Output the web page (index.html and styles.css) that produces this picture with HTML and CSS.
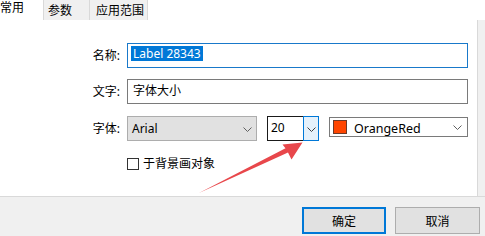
FILE: index.html
```html
<!DOCTYPE html>
<html>
<head>
<meta charset="utf-8">
<link rel="stylesheet" href="styles.css">
</head>
<body>
<div class="dialog">
  <div class="tabs">
    <div class="tab active">常用</div>
    <div class="tab t2">参数</div>
    <div class="tab t3">应用范围</div>
  </div>
  <div class="main">
    <div class="panel">
      <div class="row r1">
        <span class="lbl">名称:</span>
        <div class="input focused"><span class="sel">Label 28343</span></div>
      </div>
      <div class="row r2">
        <span class="lbl">文字:</span>
        <div class="input">字体大小</div>
      </div>
      <div class="row r3">
        <span class="lbl">字体:</span>
        <div class="font-combo">
          <span>Arial</span>
          <svg class="chev" width="9" height="5" viewBox="0 0 9 5"><path d="M0.5 0.5 L4.5 4.5 L8.5 0.5" fill="none" stroke="#606060" stroke-width="1"/></svg>
        </div>
        <div class="size-combo">
          <div class="size-text">20</div>
          <div class="size-btn"><svg width="9" height="5" viewBox="0 0 9 5"><path d="M0.5 0.5 L4.5 4.5 L8.5 0.5" fill="none" stroke="#404040" stroke-width="1"/></svg></div>
        </div>
        <div class="color-combo">
          <span class="swatch"></span>
          <span class="color-name">OrangeRed</span>
          <svg class="chev2" width="9" height="5" viewBox="0 0 9 5"><path d="M0.5 0.5 L4.5 4.5 L8.5 0.5" fill="none" stroke="#606060" stroke-width="1"/></svg>
        </div>
      </div>
      <div class="check-row">
        <span class="checkbox"></span>
        <span>于背景画对象</span>
      </div>
    </div>
    <div class="side"></div>
  </div>
  <div class="footer">
    <button class="btn default">确定</button>
    <button class="btn cancel">取消</button>
  </div>
  <svg class="arrow" width="485" height="236" viewBox="0 0 485 236">
    <polygon points="199,193 285.5,148.3 282.5,144.5 302.5,142.5 291.5,159.5 288,152.5" fill="#e8474b"/>
  </svg>
</div>
</body>
</html>
```

FILE: styles.css
```css
body {
  margin: 0;
  width: 485px;
  height: 236px;
  overflow: hidden;
  background: #fff;
  font-family: "Noto Sans", "Noto Sans CJK SC", sans-serif;
  font-size: 12px;
  color: #000;
}

.dialog {
  position: relative;
  width: 485px;
  height: 236px;
  display: flex;
  flex-direction: column;
}

.tabs {
  display: flex;
  height: 20px;
  flex: none;
}

.tab {
  box-sizing: border-box;
  height: 21px;
  line-height: 16px;
  padding-top: 3px;
  text-align: left;
  background: #f0f0f0;
  border-left: 1px solid #d9d9d9;
  border-bottom: 1px solid #d9d9d9;
}

.tab.active {
  width: 43px;
  background: #fff;
  border: none;
  padding-top: 0;
}

.t2 { width: 46px; padding-left: 4px; }
.t3 { width: 59px; padding-left: 6px; border-right: 1px solid #d9d9d9; }

.main {
  display: flex;
  height: 176px;
  flex: none;
}

.panel {
  box-sizing: border-box;
  width: 478px;
  border-right: 1px solid #d9d9d9;
  background: #fff;
  padding-top: 23px;
}

.side {
  flex: 1;
  background: #f0f0f0;
}

.row {
  display: flex;
  align-items: center;
  height: 25px;
}

.r1 { margin-bottom: 11px; }
.r2 { margin-bottom: 12px; }
.r3 { align-items: flex-start; }

.lbl {
  width: 120px;
  margin-right: 7px;
  text-align: right;
  line-height: 25px;
}

.input {
  box-sizing: border-box;
  width: 341px;
  height: 25px;
  border: 1px solid #7a7a7a;
  padding-left: 5px;
  line-height: 22px;
}

.input.focused {
  border-color: #1979ca;
  padding-left: 3px;
}

.sel {
  display: inline-block;
  background: #0078d7;
  color: #fff;
  line-height: 15px;
  padding: 0 2px;
  vertical-align: 1px;
}

.font-combo {
  box-sizing: border-box;
  width: 130px;
  height: 25px;
  background: #e1e1e1;
  border: 1px solid #adadad;
  display: flex;
  align-items: center;
  justify-content: space-between;
  padding: 0 4px 0 4px;
  margin-right: 10px;
}

.chev { margin-top: 1px; }

.size-combo {
  display: flex;
  width: 52px;
  height: 25px;
  margin-right: 10px;
}

.size-text {
  box-sizing: border-box;
  width: 36px;
  height: 25px;
  border: 1px solid #1a1a1a;
  border-right: none;
  padding-left: 3px;
  line-height: 22px;
}

.size-btn {
  box-sizing: border-box;
  width: 16px;
  height: 25px;
  border: 1px solid #0078d7;
  background: #e5f1fb;
  display: flex;
  align-items: center;
  justify-content: center;
  padding-top: 2px;
}

.color-combo {
  box-sizing: border-box;
  width: 139px;
  height: 20px;
  margin-top: 1px;
  border: 1px solid #7a7a7a;
  background: #fff;
  display: flex;
  align-items: flex-start;
  overflow: hidden;
}

.swatch {
  flex: none;
  box-sizing: border-box;
  width: 14px;
  height: 14px;
  margin: 2px 0 0 3px;
  background: #ff4500;
  border: 1px solid #6b3a2a;
}

.color-name {
  margin-left: 7px;
  line-height: 16px;
  padding-top: 3px;
  font-size: 12.5px;
}

.chev2 {
  margin-left: auto;
  margin-right: 5px;
  margin-top: 7px;
}

.check-row {
  display: flex;
  align-items: center;
  margin-top: 16px;
  padding-left: 127px;
  line-height: 14px;
}

.checkbox {
  box-sizing: border-box;
  width: 12px;
  height: 12px;
  border: 1px solid #333;
  background: #fff;
  margin-right: 4px;
}

.footer {
  flex: 1;
  box-sizing: border-box;
  background: #f0f0f0;
  border-top: 1px solid #d9d9d9;
  display: flex;
  justify-content: flex-end;
  align-items: flex-start;
  gap: 9px;
  padding: 10px 5px 0 0;
}

.btn {
  box-sizing: border-box;
  height: 27px;
  background: #e1e1e1;
  border: 1px solid #adadad;
  font-family: inherit;
  font-size: 12px;
  color: #000;
  padding: 0;
}

.btn.default {
  width: 84px;
  border: 2px solid #0078d7;
}

.btn.cancel {
  width: 85px;
}

.arrow {
  position: absolute;
  left: 0;
  top: 0;
  pointer-events: none;
}
```
